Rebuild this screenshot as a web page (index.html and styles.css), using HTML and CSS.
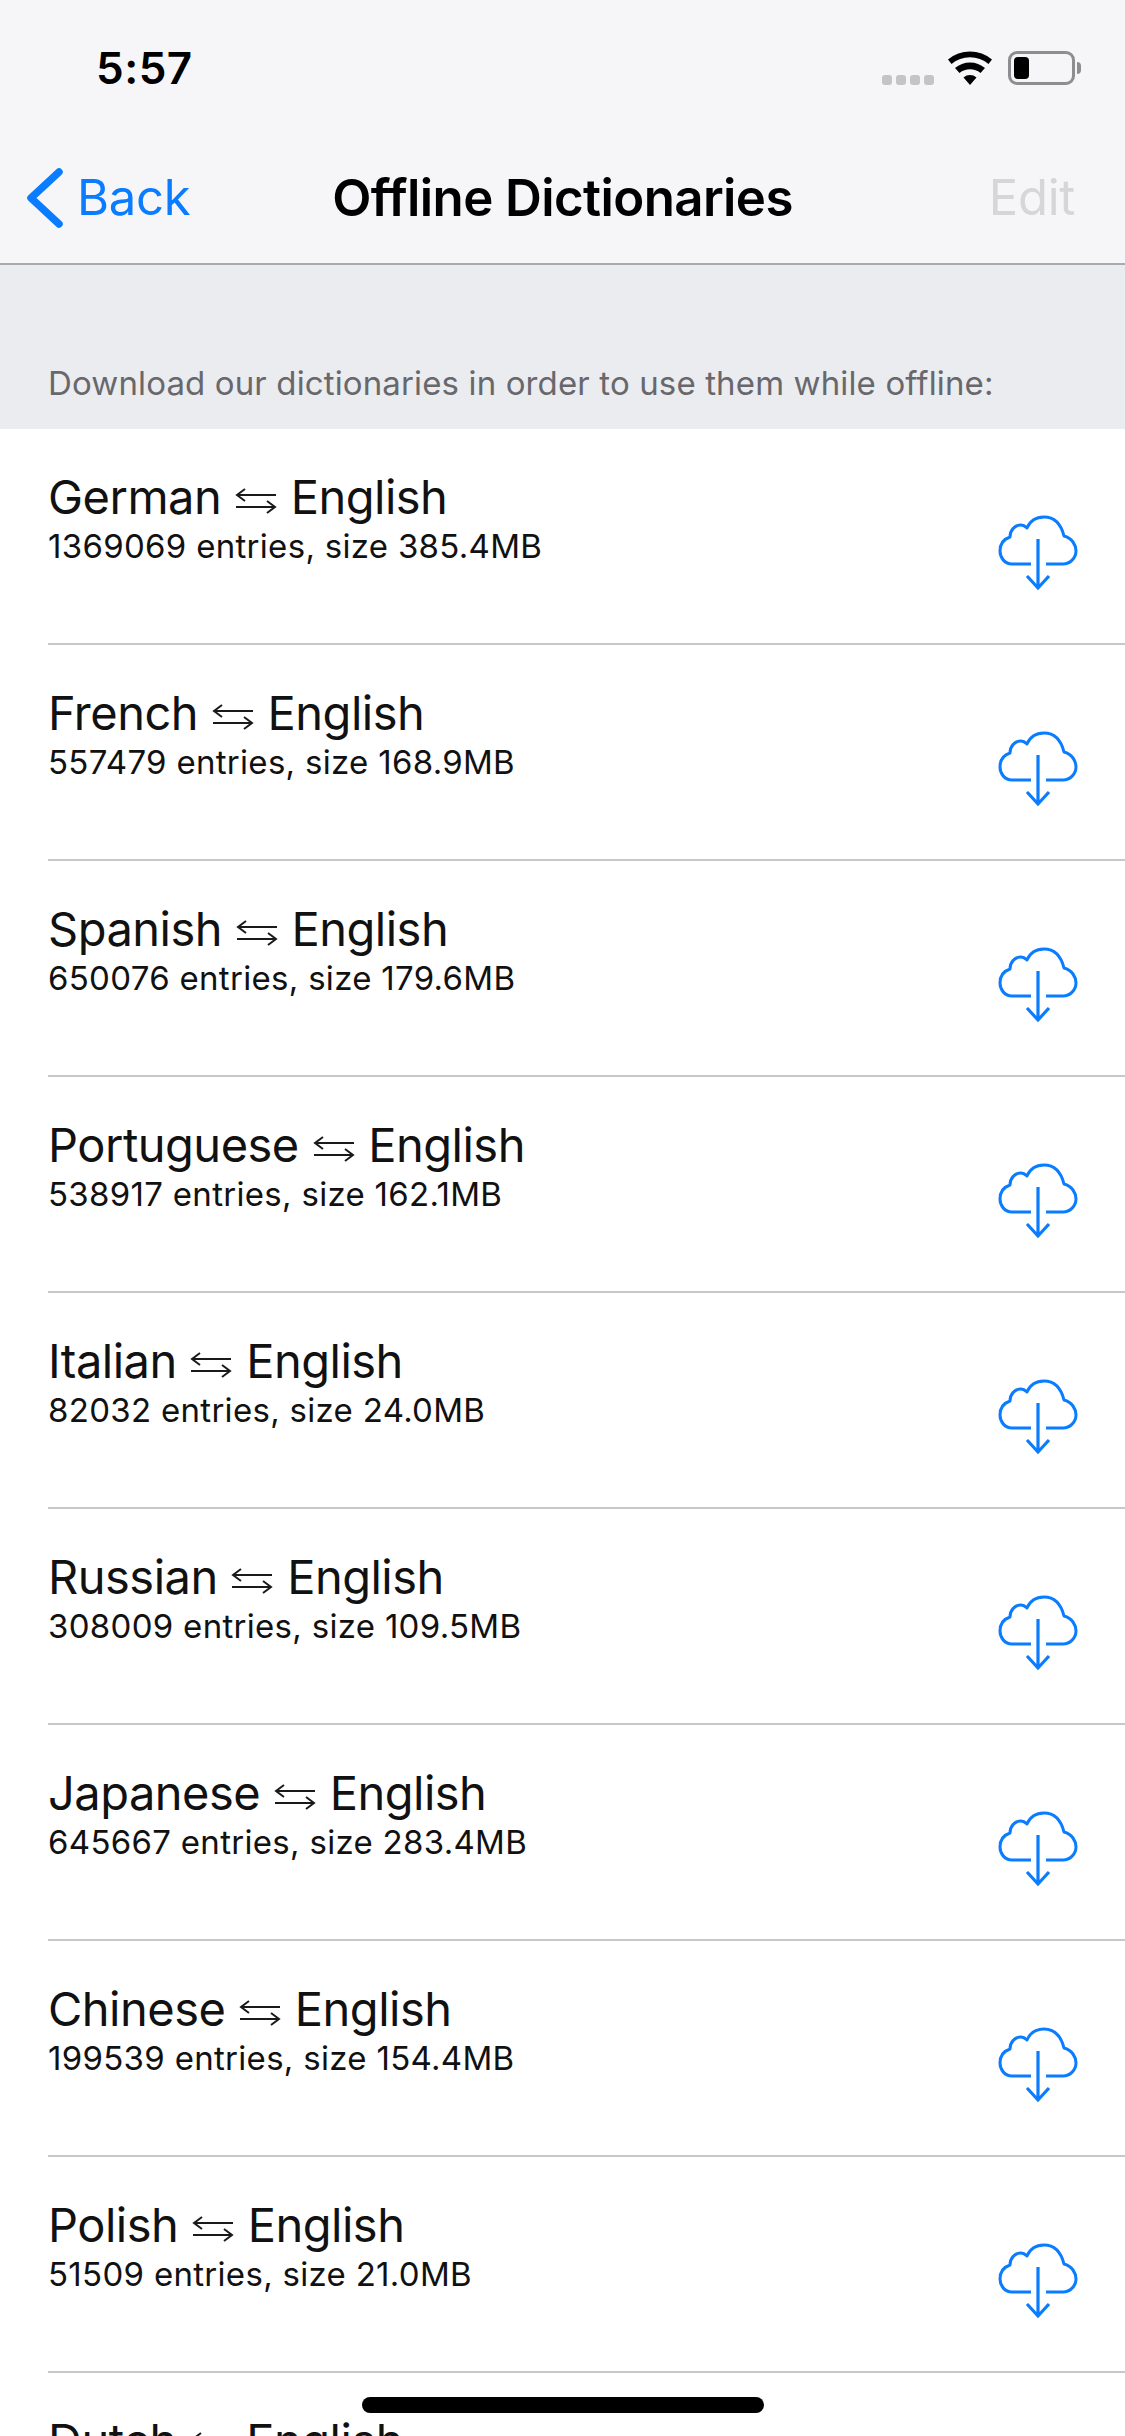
FILE: index.html
```html
<!DOCTYPE html>
<html lang="en">
<head>
<meta charset="utf-8">
<title>Offline Dictionaries</title>
<link rel="stylesheet" href="styles.css">
</head>
<body>
<svg class="defs" width="0" height="0" aria-hidden="true">
  <symbol id="swap" viewBox="0 0 42 26">
    <path d="M41 7H2M10 1 2 7l8 6M1 19h39M32 13l8 6-8 6" fill="none" stroke="#1a1a1a" stroke-width="2"/>
  </symbol>
  <symbol id="cloud" viewBox="0 0 80 76">
    <path d="M33 49H14C7 49 2 43 2 36C2 29 6 24 12 22C12 15 17 10 23 10C25 10 27 11 29 13C32 6 38 2 46 2C56 2 63 9 66 21C74 23 78 30 78 36C78 43 72 49 65 49H48" fill="none" stroke="#0a7cff" stroke-width="3" stroke-linejoin="round"/>
    <path d="M40 24v49M29 61l11 12 11-12" fill="none" stroke="#0a7cff" stroke-width="3.200"/>
  </symbol>
</svg>
<div class="screen">
  <header class="bar">
    <div class="status">
      <span class="time">5:57</span>
      <div class="indicators">
        <div class="dots"><i></i><i></i><i></i><i></i></div>
        <svg class="wifi" viewBox="0 0 44 34"><path d="M22 34 15.500 26.500a10 10 0 0 1 13 0ZM11.500 22 7 17a23 23 0 0 1 30 0l-4.500 5a16.500 16.500 0 0 0-21 0ZM3.500 13 0 8.500a34 34 0 0 1 44 0L40.500 13a29 29 0 0 0-37 0Z" fill="#000"/></svg>
        <div class="battery"><div class="cell"><i></i></div><b></b></div>
      </div>
    </div>
    <nav class="nav">
      <a class="back">
        <svg class="chev" viewBox="0 0 38 62"><path d="M33 5 5 31l28 26" fill="none" stroke="#0a7cff" stroke-width="7.500" stroke-linecap="round" stroke-linejoin="round"/></svg>
        <span>Back</span>
      </a>
      <h1>Offline Dictionaries</h1>
      <span class="edit">Edit</span>
    </nav>
  </header>
  <p class="note">Download our dictionaries in order to use them while offline:</p>
  <ul class="list">
    <li class="row"><div class="info"><div class="name">German <svg class="swap"><use href="#swap"/></svg> English</div><div class="meta">1369069 entries, size 385.4MB</div></div><svg class="dl"><use href="#cloud"/></svg></li>
    <li class="row"><div class="info"><div class="name">French <svg class="swap"><use href="#swap"/></svg> English</div><div class="meta">557479 entries, size 168.9MB</div></div><svg class="dl"><use href="#cloud"/></svg></li>
    <li class="row"><div class="info"><div class="name">Spanish <svg class="swap"><use href="#swap"/></svg> English</div><div class="meta">650076 entries, size 179.6MB</div></div><svg class="dl"><use href="#cloud"/></svg></li>
    <li class="row"><div class="info"><div class="name">Portuguese <svg class="swap"><use href="#swap"/></svg> English</div><div class="meta">538917 entries, size 162.1MB</div></div><svg class="dl"><use href="#cloud"/></svg></li>
    <li class="row"><div class="info"><div class="name">Italian <svg class="swap"><use href="#swap"/></svg> English</div><div class="meta">82032 entries, size 24.0MB</div></div><svg class="dl"><use href="#cloud"/></svg></li>
    <li class="row"><div class="info"><div class="name">Russian <svg class="swap"><use href="#swap"/></svg> English</div><div class="meta">308009 entries, size 109.5MB</div></div><svg class="dl"><use href="#cloud"/></svg></li>
    <li class="row"><div class="info"><div class="name">Japanese <svg class="swap"><use href="#swap"/></svg> English</div><div class="meta">645667 entries, size 283.4MB</div></div><svg class="dl"><use href="#cloud"/></svg></li>
    <li class="row"><div class="info"><div class="name">Chinese <svg class="swap"><use href="#swap"/></svg> English</div><div class="meta">199539 entries, size 154.4MB</div></div><svg class="dl"><use href="#cloud"/></svg></li>
    <li class="row"><div class="info"><div class="name">Polish <svg class="swap"><use href="#swap"/></svg> English</div><div class="meta">51509 entries, size 21.0MB</div></div><svg class="dl"><use href="#cloud"/></svg></li>
    <li class="row"><div class="info"><div class="name">Dutch <svg class="swap"><use href="#swap"/></svg> English</div></div><svg class="dl"><use href="#cloud"/></svg></li>
  </ul>
  <div class="home"></div>
</div>
</body>
</html>
```

FILE: styles.css
```css
* { box-sizing: border-box; }
html, body { margin: 0; padding: 0; background: #fff; }
body { font-family: Inter, "Liberation Sans", sans-serif; color: #000; }
.defs { position: absolute; }
.screen { position: relative; width: 1125px; height: 2436px; overflow: hidden; background: #fff; }

.bar { height: 265px; background: #f6f6f8; border-bottom: 2px solid #a9a9ae; }
.status { height: 132px; display: flex; justify-content: space-between; align-items: flex-start; padding: 44px 44px 0 96px; }
.time { font-size: 44px; line-height: 48px; font-weight: 600; letter-spacing: 0.5px; }
.indicators { display: flex; align-items: flex-end; height: 34px; margin-top: 7px; }
.dots { display: flex; gap: 4px; margin-right: 14px; }
.dots i { width: 10px; height: 10px; border-radius: 3px; background: #c4c4c6; }
.wifi { width: 44px; height: 34px; margin-right: 16px; }
.battery { display: flex; align-items: center; }
.cell { width: 67px; height: 34px; border: 3px solid #8e8e90; border-radius: 9px; padding: 3px; }
.cell i { display: block; width: 15px; height: 100%; background: #000; border-radius: 4px; }
.battery b { width: 4px; height: 12px; background: #8e8e90; border-radius: 0 4px 4px 0; margin-left: 2px; }

.nav { height: 131px; display: grid; grid-template-columns: 1fr auto 1fr; align-items: center; padding: 0 50px; }
.back { display: flex; align-items: center; gap: 13px; margin-left: -24px; color: #0a7cff; font-size: 49px; letter-spacing: -0.3px; }
.chev { width: 38px; height: 62px; }
.nav h1 { margin: 0; font-size: 51px; font-weight: 600; letter-spacing: -0.6px; }
.edit { justify-self: end; color: #d6d6d9; font-size: 49px; letter-spacing: -0.3px; }

.note { margin: 0; height: 164px; padding: 0 48px 26px; background: #ebecf0; color: #68686c; font-size: 33px; letter-spacing: 0.13px; display: flex; align-items: flex-end; }

.list { list-style: none; margin: 0; padding: 0 0 0 48px; }
.row { height: 216px; border-bottom: 2px solid #c8c7cc; display: flex; justify-content: space-between; padding: 39px 47px 0 0; }
.name { font-size: 47px; line-height: 58px; font-weight: 400; letter-spacing: -0.5px; color: #111; }
.swap { width: 42px; height: 26px; margin: 0 1px; }
.meta { font-size: 33px; line-height: 40px; font-weight: 400; letter-spacing: 0.3px; color: #111; }
.dl { width: 80px; height: 76px; margin-top: 47px; }

.home { position: absolute; left: 362px; top: 2397px; width: 402px; height: 16px; border-radius: 8px; background: #000; }
```
